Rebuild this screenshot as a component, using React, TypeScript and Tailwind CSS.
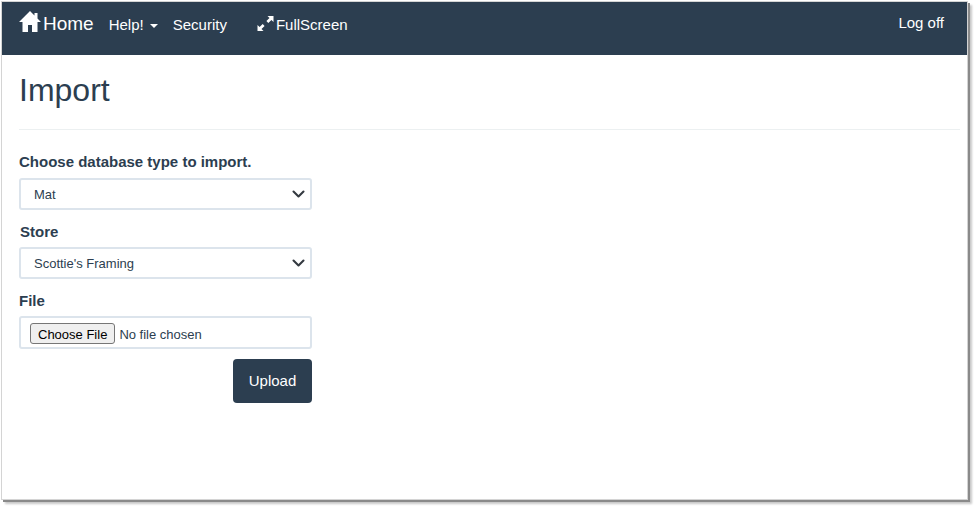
import React from "react";

function Chevron() {
  return (
    <svg className="absolute right-[7px] top-[10px] pointer-events-none" width="13" height="12" viewBox="0 0 13 12">
      <path d="M1.5 3.5l5 5 5-5" fill="none" stroke="#343a40" strokeWidth="2.1" strokeLinecap="round" strokeLinejoin="round" />
    </svg>
  );
}

function Field({ value }: { value: string }) {
  return (
    <div className="relative">
      <select
        defaultValue={value}
        className="block w-full h-[32px] appearance-none rounded-[3px] border-2 border-[#dce4ec] bg-white pl-[13px] pt-[2px] text-[13px] text-[#2c3e50] outline-none"
      >
        <option>{value}</option>
      </select>
      <Chevron />
    </div>
  );
}

export default function App() {
  return (
    <div className="w-[978px] h-[511px] bg-white overflow-hidden pl-[2px] pt-[2px] font-['Liberation_Sans',Arial,sans-serif] text-[#2c3e50]">
      <div className="w-[965px] h-[497px] bg-white shadow-[0_0_0_1px_#d4d4d4,2px_2px_0_1px_#8a8a8a,4px_4px_2px_1px_#c8c8c8]">
        <nav className="h-[53px] bg-[#2c3e50] text-white flex items-start relative">
          <a className="flex items-start ml-[17px] mt-[9px] text-[19px] leading-[24px]">
            <svg width="22" height="21" viewBox="0 0 22 21" className="mr-[2px]">
              <path d="M11 0L0 11h3.5v10h5.5v-7h4v7h5.5V11H22l-3.5-3.5V2h-3v2.5z" fill="#fff" />
            </svg>
            <span className="pt-[1px]">Home</span>
          </a>
          <a className="ml-[15px] mt-[14px] text-[15px] leading-[18px] flex items-center">
            Help!
            <span className="ml-[6px] mt-[2px] w-0 h-0 border-x-[4px] border-x-transparent border-t-[4px] border-t-white" />
          </a>
          <a className="ml-[15px] mt-[14px] text-[15px] leading-[18px]">Security</a>
          <a className="ml-[30px] mt-[14px] text-[15px] leading-[18px] flex items-start">
            <svg width="17" height="16" viewBox="0 0 17 16" className="mr-[2px]">
              <path d="M10.5 0H16.5V6L14.4 3.9 11.3 7 9.4 5.1 12.5 2zM0.5 15V9L2.6 11.1 5.7 8 7.6 9.9 4.5 13 6.5 15z" fill="#fff" />
            </svg>
            FullScreen
          </a>
          <a className="absolute right-[23px] top-[12px] text-[15px] leading-[18px]">Log off</a>
        </nav>
        <main className="pl-[17px] pr-[7px]">
          <h2 className="text-[32px] leading-[36px] pt-[17px] pb-[21px] border-b border-[#ecf0f1] font-normal">Import</h2>
          <form className="w-[293px] mt-[22px]">
            <label className="block text-[15px] font-bold leading-[20px] mb-[6px]">Choose database type to import.</label>
            <Field value="Mat" />
            <label className="block text-[15px] font-bold leading-[20px] mt-[12px] mb-[5px] pl-[1px]">Store</label>
            <Field value="Scottie's Framing" />
            <label className="block text-[15px] font-bold leading-[20px] mt-[12px] mb-[5px]">File</label>
            <div className="h-[33px] rounded-[3px] border-2 border-[#dce4ec] bg-white pl-[9px] pt-[2px] flex items-center">
              <input
                type="file"
                className="text-[13px] leading-[21px] text-[#2c3e50] w-[270px] file:mr-[4px] file:h-[21px] file:px-[7px] file:bg-[#efefef] file:border file:border-solid file:border-[#767676] file:rounded-[3px] file:text-black file:text-[13px]"
              />
            </div>
            <div className="flex justify-end mt-[10px]">
              <button type="button" className="w-[79px] h-[44px] rounded-[4px] bg-[#2c3e50] text-white text-[15px]">Upload</button>
            </div>
          </form>
        </main>
      </div>
    </div>
  );
}
